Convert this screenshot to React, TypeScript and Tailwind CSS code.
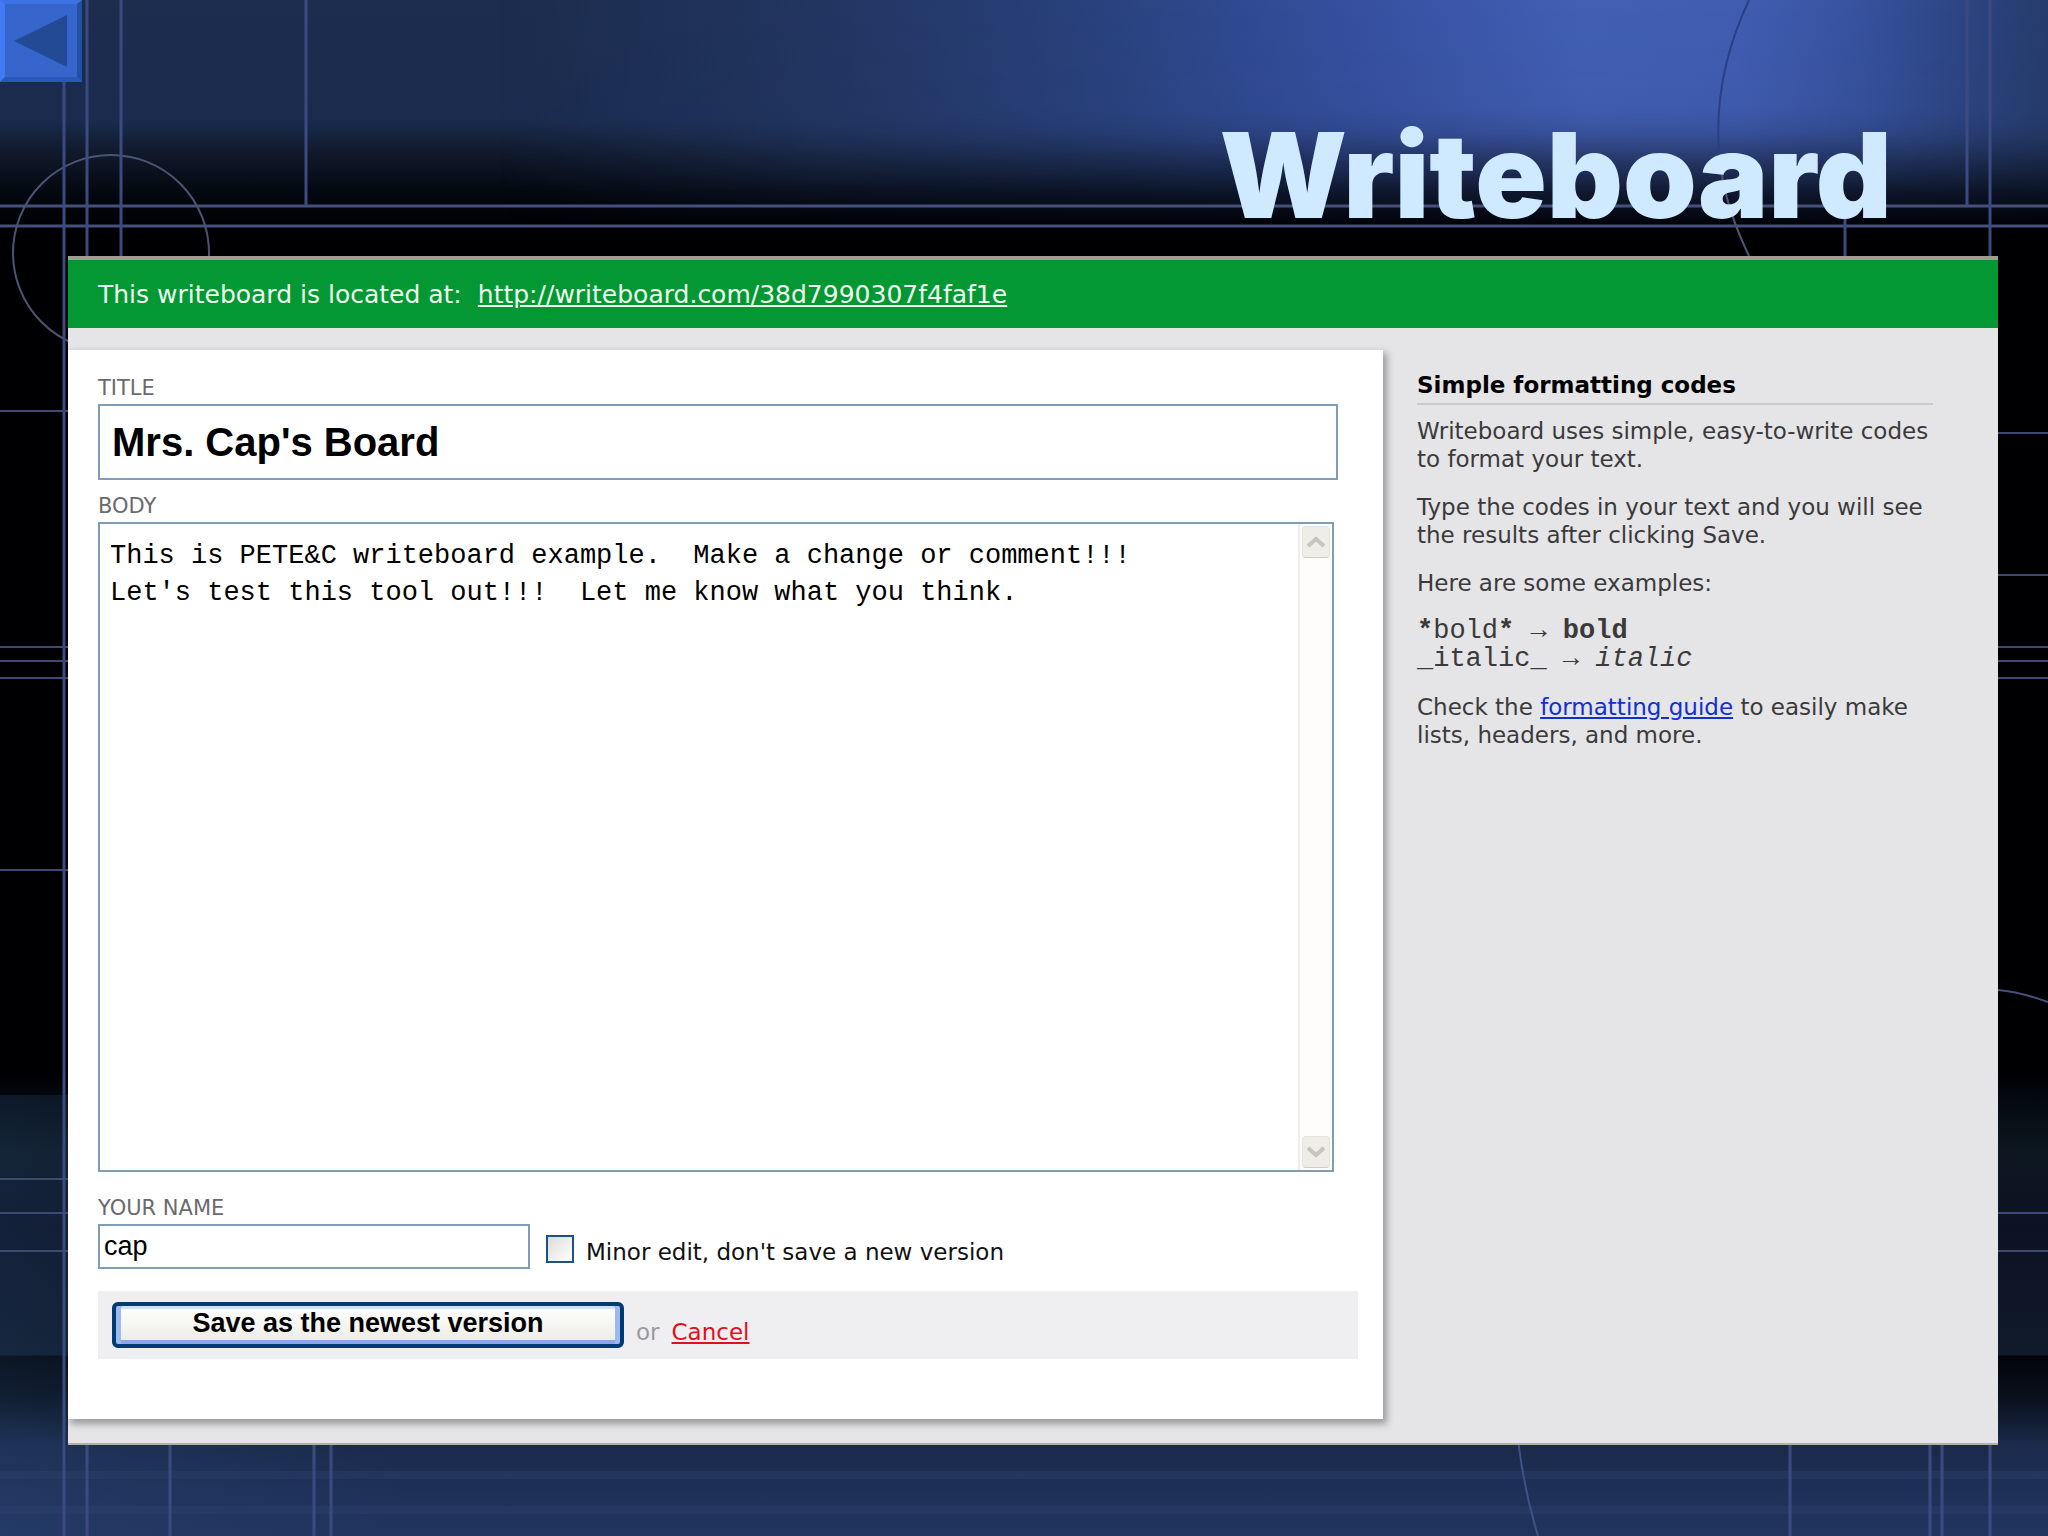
import type { ReactNode } from "react";

/**
 * Backdrop Component
 * Dark blue slide background with glow, thin guide lines and circles
 */
function Backdrop() {
  const vertical = [
    [64, 0, 1536],
    [87, 0, 256],
    [121, 0, 256],
    [306, 0, 206],
    [1845, 206, 256],
    [1967, 0, 206],
    [1990, 0, 1536],
    [87, 1440, 1536],
    [170, 1440, 1536],
    [314, 1440, 1536],
    [331, 1440, 1536],
    [1790, 1440, 1536],
    [1930, 1440, 1536],
    [1942, 1440, 1536],
  ];
  const leftRows = [411, 647, 661, 678, 870, 1179, 1213, 1251];
  const rightRows = [433, 575, 647, 661, 678, 1213, 1251];

  return (
    <svg
      className="absolute inset-0 h-full w-full"
      viewBox="0 0 2048 1536"
      preserveAspectRatio="none"
      aria-hidden="true"
    >
      <defs>
        <linearGradient id="base" x1="0" y1="0" x2="0" y2="1">
          <stop offset="0" stopColor="#1c2d4e" />
          <stop offset="0.078" stopColor="#1a2b4e" />
          <stop offset="0.1" stopColor="#10192b" />
          <stop offset="0.125" stopColor="#040810" />
          <stop offset="0.15" stopColor="#000003" />
          <stop offset="0.7" stopColor="#000002" />
          <stop offset="0.713" stopColor="#04080e" />
          <stop offset="0.75" stopColor="#0d1720" />
          <stop offset="0.8" stopColor="#0c1224" />
          <stop offset="0.882" stopColor="#101a2a" />
          <stop offset="0.883" stopColor="#020407" />
          <stop offset="0.91" stopColor="#0a101c" />
          <stop offset="0.94" stopColor="#1b2a4a" />
          <stop offset="0.97" stopColor="#1f3058" />
          <stop offset="1" stopColor="#21345e" />
        </linearGradient>
        <linearGradient id="leftTint" x1="0" y1="0" x2="1" y2="0">
          <stop offset="0" stopColor="#2a5080" stopOpacity="0.24" />
          <stop offset="1" stopColor="#2a5080" stopOpacity="0" />
        </linearGradient>
        <linearGradient id="glow" x1="0" y1="0" x2="1" y2="0">
          <stop offset="0" stopColor="#22345c" stopOpacity="0" />
          <stop offset="0.2" stopColor="#233662" stopOpacity="0.9" />
          <stop offset="0.4" stopColor="#2a4380" />
          <stop offset="0.55" stopColor="#3650a0" />
          <stop offset="0.7" stopColor="#425fb4" />
          <stop offset="0.8" stopColor="#415db2" />
          <stop offset="0.88" stopColor="#37529e" />
          <stop offset="0.95" stopColor="#2c4480" />
          <stop offset="1" stopColor="#263c6c" />
        </linearGradient>
        <linearGradient id="fade" x1="0" y1="0" x2="0" y2="1">
          <stop offset="0" stopColor="#fff" />
          <stop offset="0.45" stopColor="#f0f0f0" />
          <stop offset="0.55" stopColor="#c8c8c8" />
          <stop offset="0.68" stopColor="#707070" />
          <stop offset="0.8" stopColor="#333" />
          <stop offset="0.95" stopColor="#000" />
        </linearGradient>
        <mask id="glowMask" maskUnits="userSpaceOnUse" x="0" y="0" width="2048" height="240">
          <rect width="2048" height="240" fill="url(#fade)" />
        </mask>
      </defs>

      <rect width="2048" height="1536" fill="url(#base)" />
      <rect x="500" width="1548" height="240" fill="url(#glow)" mask="url(#glowMask)" />
      <rect y="1095" width="400" height="441" fill="url(#leftTint)" />
      <rect y="1471" width="2048" height="8" fill="#2c4068" opacity="0.4" />
      <rect y="1506" width="2048" height="8" fill="#30426e" opacity="0.4" />

      <g fill="none" stroke="#46507c" strokeWidth="3">
        <path d="M0 206H2048M0 226H2048" />
        <circle cx="111" cy="253" r="98" stroke="#4b5572" strokeWidth="2" />
        <path d="M1721 170Q1727 210 1749 256" stroke="#4b5572" strokeWidth="2" />
        <path d="M1998 990Q2020 992 2048 1002" strokeWidth="2" />
        <path d="M1518 1440Q1524 1490 1538 1536" stroke="#3d5286" strokeWidth="2" />
      </g>
      <path d="M1749 0Q1709 85 1721 170" fill="none" stroke="#2a4084" strokeWidth="2" />
      <g stroke="#3c4a80" strokeWidth="3">
        {vertical.map(([x, from, to]) => (
          <path key={`${x}-${from}`} d={`M${x} ${from}V${to}`} />
        ))}
      </g>
      <g stroke="#3f4a74" strokeWidth="2">
        {leftRows.map((y) => (
          <path key={y} d={`M0 ${y}H70`} />
        ))}
        {rightRows.map((y) => (
          <path key={y} d={`M1996 ${y}H2048`} />
        ))}
      </g>
    </svg>
  );
}

/**
 * BackButton Component
 * Bevelled square button pointing to the previous slide
 */
function BackButton() {
  return (
    <button type="button" aria-label="Back" className="block size-[82px] shrink-0">
      <svg viewBox="0 0 82 82" className="size-full">
        <path d="M0 0H82V82H0Z" fill="#3666cc" />
        <path d="M0 0H82L77 4H5Z" fill="#3d72e4" />
        <path d="M0 0L5 4V77L0 82Z" fill="#4379f6" />
        <path d="M82 0V82L77 77V4Z" fill="#2450a4" />
        <path d="M0 82L5 77H77L82 82Z" fill="#2859b6" />
        <path d="M14 41L67 15V67Z" fill="#234a94" />
      </svg>
    </button>
  );
}

interface ScrollArrowProps {
  direction: "up" | "down";
}

function ScrollArrow({ direction }: ScrollArrowProps) {
  return (
    <button
      type="button"
      aria-label={direction === "up" ? "Scroll up" : "Scroll down"}
      className="flex h-8 w-7 items-center justify-center rounded-sm border border-[#e6e4da] border-b-[#cfcdc4] bg-[#eeede7]"
    >
      <svg viewBox="0 0 20 14" className="h-3.5 w-5" fill="none" stroke="#c6c5c0" strokeWidth="4">
        {direction === "up" ? <path d="M2 11L10 4L18 11" /> : <path d="M2 3L10 10L18 3" />}
      </svg>
    </button>
  );
}

interface FieldLabelProps {
  htmlFor: string;
  children: ReactNode;
}

function FieldLabel({ htmlFor, children }: FieldLabelProps) {
  return (
    <label htmlFor={htmlFor} className="block text-[21px] leading-6 text-[#6a6a6e]">
      {children}
    </label>
  );
}

function EditorForm() {
  return (
    <form className="min-w-0 flex-1 bg-white pt-[26px] pr-[25px] pb-[60px] pl-[30px] shadow-[3px_4px_7px_1px_rgba(0,0,0,0.32)]">
      <FieldLabel htmlFor="title">TITLE</FieldLabel>
      <input
        id="title"
        type="text"
        defaultValue="Mrs. Cap's Board"
        className="mt-1 block h-[76px] w-[calc(100%-20px)] border-2 border-[#7f9db9] bg-white px-3 font-['Liberation_Sans',sans-serif] text-[40px] font-bold text-black"
      />

      <div className="mt-3.5">
        <FieldLabel htmlFor="body">BODY</FieldLabel>
      </div>
      <div className="mt-1 mr-6 flex h-[650px] border-2 border-[#7f9db9] bg-white">
        <textarea
          id="body"
          spellCheck={false}
          defaultValue={
            "This is PETE&C writeboard example.  Make a change or comment!!!\nLet's test this tool out!!!  Let me know what you think."
          }
          className="min-w-0 flex-1 resize-none overflow-hidden px-2.5 py-3.5 font-['Liberation_Mono',monospace] text-[27px] leading-[37px] text-black"
        />
        <div className="flex w-[34px] flex-col items-center justify-between border-l-2 border-[#efedea] bg-[#fefdfc] py-0.5">
          <ScrollArrow direction="up" />
          <ScrollArrow direction="down" />
        </div>
      </div>

      <div className="mt-6">
        <FieldLabel htmlFor="name">YOUR NAME</FieldLabel>
      </div>
      <div className="mt-1 flex items-center gap-4">
        <input
          id="name"
          type="text"
          defaultValue="cap"
          className="h-[45px] w-[432px] border-2 border-[#7f9db9] bg-white px-1 font-['Liberation_Sans',sans-serif] text-[27px] text-black"
        />
        <div className="flex items-center gap-3 pt-1">
          <input
            id="minor"
            type="checkbox"
            className="size-7 appearance-none border-2 border-[#1c5180] bg-linear-to-br from-[#dcdcd7] to-white"
          />
          <label htmlFor="minor" className="pt-1.5 text-[23px] leading-7 text-[#111]">
            Minor edit, don't save a new version
          </label>
        </div>
      </div>

      <div className="mt-[22px] flex h-[68px] items-center bg-[#efeef0] px-3.5">
        <button
          type="submit"
          className="h-[46px] w-[512px] rounded-md border-4 border-[#003c74] bg-linear-to-b from-white to-[#ecebe4] pb-1 font-['Liberation_Sans',sans-serif] text-[27px] leading-8 font-bold text-black shadow-[inset_5px_0_0_#9db9f0,inset_-5px_0_0_#9db9f0,inset_0_3px_0_#cfe0fb,inset_0_-4px_0_#8aa6e6]"
        >
          Save as the newest version
        </button>
        <div className="flex gap-3 pt-3.5 pl-3 text-[23px] text-[#9a9a9c]">
          <span>or</span>
          <a href="#cancel" className="text-[#e0101c] underline underline-offset-2">
            Cancel
          </a>
        </div>
      </div>
    </form>
  );
}

function FormattingHelp() {
  return (
    <aside className="w-[615px] shrink-0 pt-5 pr-[65px] pl-[34px] text-[23px] leading-7 text-[#3a3a3c]">
      <h2 className="border-b-2 border-[#cbcbcd] pb-[3px] leading-[30px] font-bold text-black">
        Simple formatting codes
      </h2>
      <div className="mt-3 space-y-5">
        <p className="whitespace-nowrap">
          Writeboard uses simple, easy-to-write codes
          <br />
          to format your text.
        </p>
        <p>
          Type the codes in your text and you will see
          <br />
          the results after clicking Save.
        </p>
        <p>Here are some examples:</p>
        <p className="font-['Liberation_Mono',monospace] text-[27px]">
          <b>*</b>bold<b>*</b> → <b>bold</b>
          <br />
          _italic_ → <i>italic</i>
        </p>
        <p>
          Check the{" "}
          <a href="#guide" className="text-[#1030d0] underline underline-offset-2">
            formatting guide
          </a>{" "}
          to easily make
          <br />
          lists, headers, and more.
        </p>
      </div>
    </aside>
  );
}

export default function App() {
  return (
    <div className="relative min-h-screen overflow-hidden bg-black font-['DejaVu_Sans',sans-serif]">
      <Backdrop />
      <div className="relative">
        <header className="flex h-64 items-start justify-between pr-[156px]">
          <BackButton />
          <h1 className="pt-[105px] font-['Inter',sans-serif] text-[118px] leading-[140px] font-black text-[#cfeaff]">
            Writeboard
          </h1>
        </header>

        <main className="mr-[50px] ml-[68px] border-t-4 border-b-2 border-t-[#a09c90] border-b-[#b5b09c] bg-[#e5e4e6]">
          <p className="flex h-[68px] items-center gap-4 bg-[#039833] pt-0.5 pl-[30px] text-[25px] text-[#f0fbf0]">
            <span>This writeboard is located at:</span>
            <a href="http://writeboard.com/38d7990307f4faf1e" className="underline underline-offset-2">
              http://writeboard.com/38d7990307f4faf1e
            </a>
          </p>
          <div className="flex overflow-hidden pt-[22px] pb-6">
            <EditorForm />
            <FormattingHelp />
          </div>
        </main>
      </div>
    </div>
  );
}
